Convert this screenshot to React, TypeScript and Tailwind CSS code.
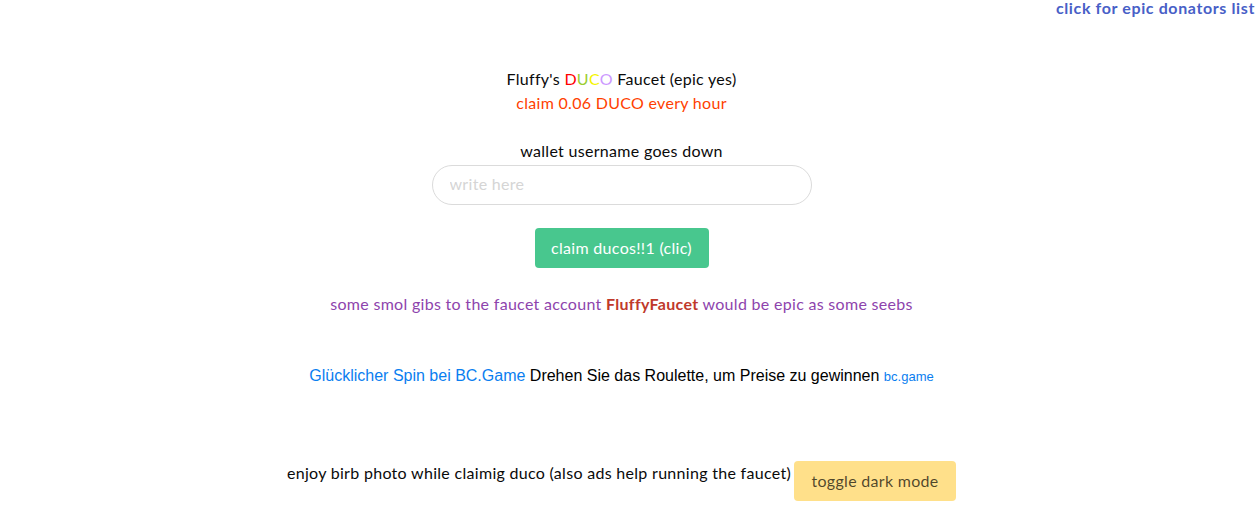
import React from "react";

export default function App() {
  return (
    <div className="w-[1258px] h-[517px] overflow-hidden bg-white text-[16px] text-[#0a0a0a] tracking-[0.3px] font-['Lato','Noto_Sans',sans-serif]">
      <div className="flex justify-end pr-[3px] h-[17px] leading-[16px]">
        <a className="font-bold tracking-[0.62px] text-[#485fc7] cursor-pointer">click for epic donators list</a>
      </div>
      <div className="w-[1243px] flex flex-col items-center leading-[24px] pt-[50px]">
        <div>
          Fluffy's <span className="text-[#ff0000]">D</span>
          <span className="text-[#9acd32]">U</span>
          <span className="text-[#f5f500]">C</span>
          <span className="text-[#cc99ff]">O</span> Faucet (epic yes)
        </div>
        <div className="text-[#ff3f00]">claim 0.06 DUCO every hour</div>
        <div className="mt-[24px]">wallet username goes down</div>
        <input
          className="mt-[2px] w-[380px] h-[40px] rounded-full border border-[#dbdbdb] px-[17px] pb-[3px] text-[16px] tracking-[0.3px] placeholder:text-[#d5d5d5] outline-none"
          placeholder="write here"
        />
        <button className="mt-[23px] w-[174px] h-[40px] rounded-[4px] bg-[#48c78e] text-white">
          claim ducos!!1 (clic)
        </button>
        <div className="mt-[24px] text-[#8e44ad]">
          some smol gibs to the faucet account{" "}
          <span className="font-bold text-[#c0392b]">FluffyFaucet</span> would be epic as some seebs
        </div>
        <div className="mt-[48px] tracking-normal font-['Liberation_Sans',Arial,sans-serif] text-black">
          <span className="text-[#0a7ef0]">Glücklicher Spin bei BC.Game</span> Drehen Sie das Roulette, um Preise zu gewinnen{" "}
          <span className="text-[13px] text-[#0a7ef0]">bc.game</span>
        </div>
        <div className="mt-[72px] flex items-start gap-[3px]">
          <span>enjoy birb photo while claimig duco (also ads help running the faucet)</span>
          <button className="w-[162px] h-[40px] rounded-[4px] bg-[#ffe08a] text-[rgba(0,0,0,0.7)]">
            toggle dark mode
          </button>
        </div>
      </div>
    </div>
  );
}
